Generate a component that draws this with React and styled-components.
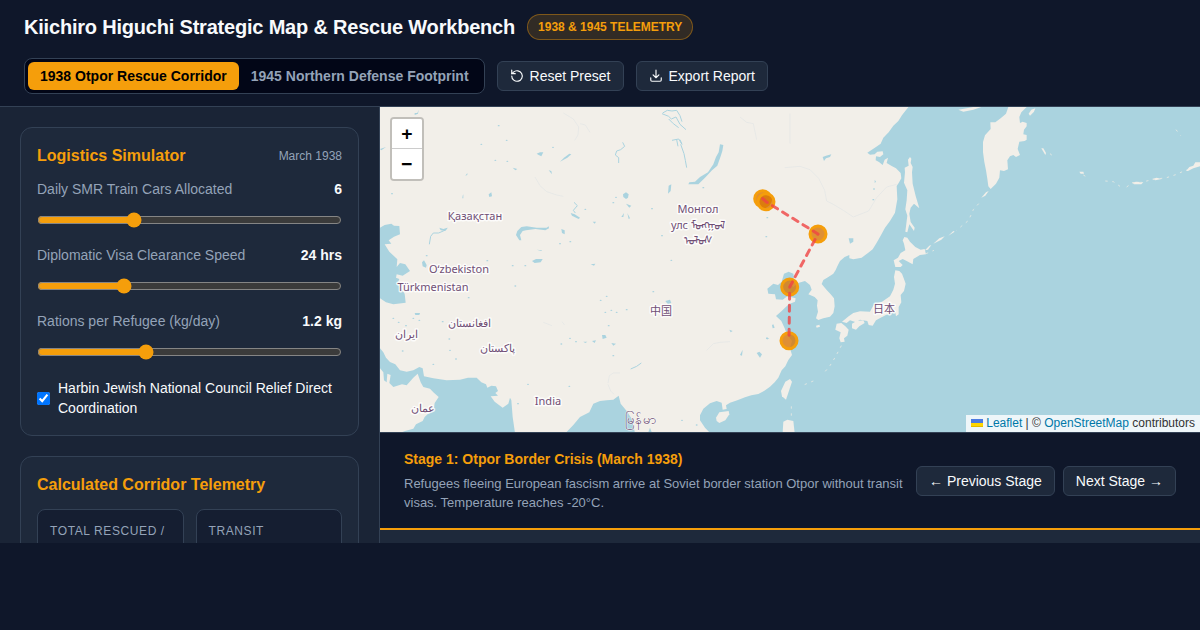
import React, { useState } from "react";
import styled, { createGlobalStyle } from "styled-components";

const GlobalStyle = createGlobalStyle`
  * {
    box-sizing: border-box;
  }

  body {
    margin: 0;
    background: #0f172a;
    color: #f8fafc;
    font-family: "Liberation Sans", Arial, sans-serif;
    font-size: 14px;
  }

  h1, h2, h3, p {
    margin: 0;
  }
`;

const sliders = [
  { id: "cars", label: "Daily SMR Train Cars Allocated", min: 2, max: 15, step: 1, value: 6, format: (v) => v },
  { id: "visa", label: "Diplomatic Visa Clearance Speed", min: 6, max: 72, step: 1, value: 24, format: (v) => `${v} hrs` },
  { id: "rations", label: "Rations per Refugee (kg/day)", min: 0.5, max: 2.5, step: 0.1, value: 1.2, format: (v) => `${v} kg` },
];

const stops = [
  [382.7, 91.7],
  [386, 94.7],
  [438, 127],
  [409.7, 180],
  [409, 233.7],
];

const labels = [
  { x: 95, y: 113, text: "Қазақстан" },
  { x: 79, y: 166, text: "Oʻzbekiston" },
  { x: 53, y: 184, text: "Türkmenistan" },
  { x: 318, y: 106, text: "Монгол" },
  { x: 318, y: 122, text: "улс ᠮᠣᠩᠭᠣᠯ" },
  { x: 318, y: 137, text: "ᠤᠯᠤᠰ" },
  { x: 281, y: 208, text: "中国" },
  { x: 504, y: 206, text: "日本" },
  { x: 89, y: 220, text: "افغانستان" },
  { x: 26, y: 231, text: "ایران" },
  { x: 117, y: 245, text: "پاکستان" },
  { x: 43, y: 305, text: "عمان" },
  { x: 168, y: 298, text: "India" },
  { x: 261, y: 317, text: "မြန်မာ", large: true },
];

// Coastlines are plotted on a grid three times finer than the map units
const seas = [
  "M1585 0L1572 14 1564 28 1555 42 1540 56 1526 76 1510 92 1502 110 1488 120 1462 137 1470 143 1484 142 1492 134 1508 133 1510 142 1500 150 1488 148 1487 160 1497 165 1508 174 1514 158 1524 152 1520 168 1535 177 1548 184 1562 198 1564 214 1556 228 1550 237 1552 277 1545 317 1530 342 1515 362 1502 386 1490 407 1478 427 1465 437 1445 452 1420 457 1408 454 1408 444 1394 450 1380 462 1372 478 1367 489 1360 500 1345 510 1330 519 1325 531 1340 549 1352 562 1362 574 1364 598 1360 618 1350 629 1330 634 1315 639 1308 634 1314 614 1311 596 1313 580 1304 570 1285 562 1295 548 1290 534 1275 522 1257 527 1240 540 1228 528 1242 512 1240 500 1226 494 1212 500 1205 524 1194 534 1180 530 1162 545 1165 560 1185 562 1188 577 1208 578 1222 568 1247 574 1245 584 1226 592 1205 612 1188 627 1204 642 1214 664 1220 680 1236 702 1230 724 1236 744 1225 759 1216 778 1205 790 1195 812 1184 826 1170 839 1152 852 1135 861 1114 865 1095 871 1072 880 1050 887 1038 895 1040 906 1028 908 1025 887 1010 882 990 889 970 905 960 925 960 940 975 962 990 978H2460V0Z",
  "M0 724L10 736 18 752 30 765 46 772 60 790 80 794 100 790 118 780 128 784 132 808 160 814 200 820 240 818 264 812 290 812 304 826 318 832 322 842 334 836 348 838 354 852 346 858 354 866 332 868 344 884 368 902 385 890 390 872 394 880 398 930 405 978H60L75 972 100 965 108 952 128 942 134 930 150 915 162 902 164 888 176 870 160 856 150 845 130 840 122 826 113 800 100 812 80 835 66 832 40 840 28 828 32 804 22 800 20 826 12 820 10 796 0 784Z",
  "M557 978L580 954 600 930 628 916 640 890 660 882 680 880 700 878 716 866 722 890 740 912 755 935 765 978Z",
  "M0 362L14 354 34 350 42 356 58 357 60 382 42 389 26 400 34 410 14 412 28 434 52 457 50 480 60 468 76 472 90 492 68 506 50 502 48 512 58 516 52 530 74 560 77 587 40 592 18 586 0 574Z",
  "M1020 112L1030 114 1027 132 1022 148 1012 176 996 190 975 212 955 232 925 232 928 226 945 224 960 210 984 196 1000 172 1008 150 1016 136Z",
  "M408 384L412 372 424 360 440 358 470 362 500 362 506 358 507 364 496 370 466 366 438 370 428 372 420 384 424 400 418 400Z",
  "M804 978L810 962 816 978Z",
];

const islands = [
  "M1885 0L1878 20 1862 34 1846 46 1831 46 1832 66 1815 85 1809 105 1809 135 1813 165 1818 190 1822 215 1825 238 1832 246 1848 230 1858 212 1860 190 1872 192 1884 187 1882 160 1890 148 1900 144 1908 150 1920 144 1913 126 1918 104 1934 102 1940 98 1940 84 1930 82 1932 68 1940 58 1940 48 1928 44 1920 48 1918 30 1924 16 1940 0Z",
  "M1590 150L1584 158 1586 176 1574 182 1575 196 1572 227 1582 250 1580 280 1576 307 1582 326 1576 374 1582 376 1588 352 1602 372 1604 362 1592 345 1588 320 1592 302 1602 290 1618 304 1607 267 1598 230 1596 196 1598 180 1592 168 1594 155Z",
  "M1573 390L1582 392 1590 404 1606 420 1622 428 1634 426 1638 442 1620 444 1600 456 1598 472 1580 462 1568 456 1556 462 1568 474 1562 480 1546 480 1541 460 1554 452 1562 438 1576 430 1572 410 1568 400Z",
  "M1546 490L1558 492 1566 500 1572 516 1577 530 1572 552 1562 564 1564 586 1556 600 1556 622 1548 628 1546 616 1530 620 1518 624 1502 632 1488 640 1478 656 1466 654 1462 642 1440 638 1428 646 1410 640 1400 648 1386 644 1406 628 1420 618 1440 613 1470 614 1482 592 1506 584 1530 568 1540 548 1545 530 1542 510Z",
  "M1370 650L1384 648 1396 658 1406 668 1402 686 1392 694 1394 704 1382 706 1378 694 1382 676 1366 668Z",
  "M1416 650L1430 642 1450 640 1454 648 1438 658 1428 668 1416 664Z",
  "M1216 824L1230 816 1236 824 1228 848 1218 878 1206 868 1203 852Z",
  "M1008 932L1018 916 1046 912 1048 922 1036 940 1018 948 1010 942Z",
  "M1210 944L1222 938 1240 942 1244 978H1208Z",
  "M1308 656L1318 653 1320 659 1310 662Z",
  "M1735 8L1760 4 1780 0H1804L1780 8 1750 14Z",
  "M1560 0H1585L1568 22 1556 28Z",
  "M1946 20L1954 8 1966 4 1962 14 1950 26Z",
  "M1804 272L1818 256 1826 252 1816 266Z",
  "M1635 430L1648 416 1654 414 1644 428Z",
  "M1660 410L1678 394 1694 388 1684 398Z",
  "M1705 386L1720 372 1724 374Z",
  "M1984 124L1990 124 1998 138 1996 144Z",
  "M2098 194L2110 194 2112 200 2102 200Z",
  "M2418 192L2428 180 2440 176 2446 166 2460 166V178L2440 184 2424 192Z",
  "M2256 226L2270 224 2290 226 2284 232 2262 232Z",
  "M2316 216L2330 212 2345 216 2326 220Z",
];

const lakes = [
  "M470 140L480 136 490 136 484 148 476 144Z",
  "M540 164L552 152 568 140 574 142 562 152Z",
  "M506 190L514 192 516 202Z",
  "M398 182L412 186 406 190Z",
  "M326 262L334 256 336 268 328 270Z",
  "M256 206L262 198 262 204Z",
  "M248 266L250 262 250 274 247 274Z",
  "M729 262L738 256 746 262 744 272 738 276 730 270Z",
  "M738 290L754 296 748 302Z",
  "M724 330L732 318 730 330Z",
  "M742 318L750 334 746 336Z",
  "M572 318L584 322 600 332 596 336 576 326Z",
  "M544 366L554 370 554 382 546 378Z",
  "M638 344L648 344 644 350Z",
  "M456 462L468 456 488 456 482 466 464 468Z",
  "M470 428L486 430 484 432Z",
  "M126 466L132 460 140 474 138 482 128 478Z",
  "M632 472L646 470 642 476Z",
  "M178 362L190 366 202 362 196 372 182 370Z",
  "M104 18L112 18 116 8 114 20 104 24Z",
  "M0 126L18 120 4 130Z",
  "M1328 150L1338 146 1354 142 1350 150 1338 154 1332 162Z",
  "M1406 394L1420 394 1420 404 1410 410Z",
  "M866 236L874 232 872 252 864 260Z",
  "M856 582L870 578 874 588 864 592Z",
  "M104 618L120 618 118 624 106 624Z",
  "M666 684L676 684 680 692 668 696Z",
  "M694 708L708 710 700 716Z",
  "M1130 738L1138 734 1146 742 1140 752Z",
  "M1158 694L1164 692 1162 698Z",
  "M1176 654L1180 652 1184 662 1178 664Z",
  "M1080 744L1088 728 1086 746Z",
  "M1048 668L1058 672 1052 676Z",
  "M1160 690L1168 696 1158 696Z",
  "M610 704L622 704 616 708Z",
  "M636 702L648 700 644 708Z",
  "M1484 218L1488 224 1484 228Z",
];

const ponds = [
  [356, 56], [380, 100], [304, 112], [346, 160], [382, 163], [519, 121], [36, 260], [616, 307],
  [700, 287], [816, 305], [708, 271], [540, 410], [571, 404], [140, 446], [322, 461], [398, 476],
  [436, 476], [304, 500], [406, 537], [266, 572], [40, 634], [100, 634], [56, 646], [78, 656],
  [188, 644], [68, 732], [160, 772], [210, 730], [228, 756], [662, 580], [680, 568], [676, 616],
  [694, 610], [740, 608], [710, 616], [686, 656], [570, 694], [588, 704], [544, 711], [700, 746],
  [568, 838], [444, 832], [414, 890], [820, 554], [1162, 332], [1159, 389], [846, 386], [874, 460],
  [970, 242], [1482, 246], [1480, 278], [906, 940], [950, 954], [118, 640], [208, 696],
];

const rivers = [
  "M148 412L152 388 160 378 176 378 190 372 202 364",
  "M728 106L734 118 722 128 710 132 706 144 716 152 716 168",
  "M582 286L592 296 580 310 586 318",
  "M848 18L862 10 876 12 890 10 900 26 906 44",
  "M846 20L866 28 874 36 888 30 900 52 918 68",
  "M876 100L896 96 906 112 900 98M890 98L894 118M902 112L912 140 916 160 920 182",
  "M866 36L880 50 896 62",
  "M752 786L770 778 784 768",
];

const streams = [
  "M465 210L480 236 500 254 530 264 550 268",
  "M550 18L580 36 596 60 594 84 584 100M600 50L616 54 630 76",
  "M1214 182L1260 178 1290 188 1316 214 1334 250 1340 282 1360 292 1390 310 1420 330 1466 312 1490 272 1520 240 1550 232",
  "M1230 20V110M1080 30L1100 46 1120 50 1130 98",
  "M490 646L516 656M546 644L554 654M980 730L1000 710 1020 706 1050 704",
  "M684 828L688 806 700 798 720 798M684 832L692 852 702 862",
];

const ResetIcon = () => (
  <svg width="14" height="14" viewBox="0 0 24 24" fill="none" stroke="currentColor" strokeWidth="2" strokeLinecap="round" strokeLinejoin="round" aria-hidden="true">
    <path d="M3 12a9 9 0 1 0 3-6.7L3 8" />
    <path d="M3 2v6h6" />
  </svg>
);

const DownloadIcon = () => (
  <svg width="14" height="14" viewBox="0 0 24 24" fill="none" stroke="currentColor" strokeWidth="2" strokeLinecap="round" strokeLinejoin="round" aria-hidden="true">
    <path d="M21 15v4a2 2 0 0 1-2 2H5a2 2 0 0 1-2-2v-4M7 10l5 5 5-5M12 15V2" />
  </svg>
);

const MapCanvas = () => (
  <MapSvg viewBox="0 0 820 325" preserveAspectRatio="xMidYMid slice" role="img" aria-label="Rescue corridor map">
    <rect width="820" height="325" fill="#f2efe9" />
    <g transform="scale(0.33333)">
      <g fill="none" stroke="#e3e6e5" strokeWidth="2">
        {streams.map((d) => <path key={d} d={d} />)}
      </g>
      <g fill="#aad3df">
        {seas.map((d) => <path key={d} d={d} />)}
        {lakes.map((d) => <path key={d} d={d} />)}
        {ponds.map(([x, y], i) => <ellipse key={i} cx={x} cy={y} rx="3" ry="2" />)}
      </g>
      <g fill="none" stroke="#aad3df" strokeWidth="3">
        {rivers.map((d) => <path key={d} d={d} />)}
      </g>
      <g fill="#f2efe9">
        {islands.map((d) => <path key={d} d={d} />)}
      </g>
      <g fill="none" stroke="#dfe6e2" strokeWidth="3" strokeDasharray="7 14">
        <path d="M1796 290L1780 308 1766 340 1744 358 1730 370M1638 440L1662 430" />
        <path d="M2110 204L2120 210M2176 222L2200 224 2220 238M2240 240L2256 228 2284 226 2316 218 2360 212 2390 202 2420 188M2010 140L2020 148" />
        <path d="M1384 716L1366 750 1350 776 1330 800M1300 822L1266 836M1234 898V936M2388 68L2402 86" />
      </g>
    </g>
    <g fill="#d97706" fillOpacity="0.8" stroke="#f59e0b" strokeWidth="3">
      {stops.map(([x, y]) => <circle key={x} cx={x} cy={y} r="8" />)}
    </g>
    <polyline points={stops.map((s) => s.join(",")).join(" ")} fill="none" stroke="#ef4444" strokeOpacity="0.8" strokeWidth="3" strokeDasharray="6 6" strokeLinecap="round" strokeLinejoin="round" />
    {labels.map((l) => (
      <MapLabel key={l.text} x={l.x} y={l.y} $large={l.large}>{l.text}</MapLabel>
    ))}
  </MapSvg>
);

const App = () => {
  const [preset, setPreset] = useState("1938");
  const [values, setValues] = useState(sliders.map((s) => s.value));
  const [relief, setRelief] = useState(true);

  const handleSlide = (index, value) => {
    setValues(values.map((v, i) => (i === index ? value : v)));
  };

  return (
    <Page>
      <GlobalStyle />
      <Header>
        <TitleRow>
          <Title>Kiichiro Higuchi Strategic Map &amp; Rescue Workbench</Title>
          <Badge>1938 &amp; 1945 TELEMETRY</Badge>
        </TitleRow>
        <Toolbar>
          <Tabs>
            <Tab $active={preset === "1938"} onClick={() => setPreset("1938")}>
              1938 Otpor Rescue Corridor
            </Tab>
            <Tab $active={preset === "1945"} onClick={() => setPreset("1945")}>
              1945 Northern Defense Footprint
            </Tab>
          </Tabs>
          <Button onClick={() => setValues(sliders.map((s) => s.value))}>
            <ResetIcon />
            Reset Preset
          </Button>
          <Button>
            <DownloadIcon />
            Export Report
          </Button>
        </Toolbar>
      </Header>

      <Workspace>
        <Sidebar>
          <Card>
            <CardHeader>
              <CardTitle>Logistics Simulator</CardTitle>
              <CardDate>March 1938</CardDate>
            </CardHeader>
            {sliders.map((s, i) => (
              <Control key={s.id}>
                <ControlLabel htmlFor={s.id}>
                  {s.label}
                  <strong>{s.format(values[i])}</strong>
                </ControlLabel>
                <Slider
                  id={s.id}
                  type="range"
                  min={s.min}
                  max={s.max}
                  step={s.step}
                  value={values[i]}
                  onChange={(e) => handleSlide(i, Number(e.target.value))}
                />
              </Control>
            ))}
            <CheckLabel>
              <input type="checkbox" checked={relief} onChange={(e) => setRelief(e.target.checked)} />
              Harbin Jewish National Council Relief Direct Coordination
            </CheckLabel>
          </Card>
          <Card>
            <CardHeader>
              <CardTitle>Calculated Corridor Telemetry</CardTitle>
            </CardHeader>
            <Stats>
              <Stat>Total Rescued /</Stat>
              <Stat>Transit</Stat>
            </Stats>
          </Card>
        </Sidebar>

        <Main>
          <MapPanel>
            <MapCanvas />
            <ZoomControl>
              <ZoomButton aria-label="Zoom in">+</ZoomButton>
              <ZoomButton aria-label="Zoom out">−</ZoomButton>
            </ZoomControl>
            <Attribution>
              <a href="#leaflet">
                <svg width="12" height="8" viewBox="0 0 12 8" aria-hidden="true">
                  <path fill="#4C7BE1" d="M0 0h12v4H0z" />
                  <path fill="#FFD500" d="M0 4h12v3H0z" />
                  <path fill="#E0BC00" d="M0 7h12v1H0z" />
                </svg>{" "}
                Leaflet
              </a>{" "}
              | © <a href="#osm">OpenStreetMap</a> contributors
            </Attribution>
          </MapPanel>
          <Stage>
            <StageText>
              <StageTitle>Stage 1: Otpor Border Crisis (March 1938)</StageTitle>
              <StageDescription>
                Refugees fleeing European fascism arrive at Soviet border station Otpor without transit visas. Temperature
                reaches -20°C.
              </StageDescription>
            </StageText>
            <StageButtons>
              <Button>← Previous Stage</Button>
              <Button>Next Stage →</Button>
            </StageButtons>
          </Stage>
          <BottomStrip />
        </Main>
      </Workspace>
    </Page>
  );
};

const Page = styled.div`
  height: calc(100vh - 87px);
  display: flex;
  flex-direction: column;
  overflow: hidden;
`;

const Header = styled.header`
  display: flex;
  flex-direction: column;
  gap: 16px;
  padding: 12px 24px;
  border-bottom: 1px solid #334155;
`;

const TitleRow = styled.div`
  display: flex;
  align-items: center;
  gap: 12px;
`;

const Title = styled.h1`
  font-size: 20px;
  line-height: 30px;
  font-weight: 700;
  letter-spacing: -0.01em;
`;

const Badge = styled.span`
  padding: 0 10px;
  border: 1px solid rgba(245, 158, 11, 0.4);
  border-radius: 13px;
  background: rgba(245, 158, 11, 0.15);
  color: #f59e0b;
  font-size: 12px;
  line-height: 24px;
  font-weight: 700;
`;

const Toolbar = styled.div`
  display: flex;
  align-items: center;
  gap: 12px;
`;

const Tabs = styled.div`
  display: flex;
  padding: 3px;
  border: 1px solid #334155;
  border-radius: 8px;
  background: #020617;
`;

const Tab = styled.button`
  height: 28px;
  padding: 0 12px;
  border: none;
  border-radius: 6px;
  background: ${(props) => (props.$active ? "#f59e0b" : "transparent")};
  color: ${(props) => (props.$active ? "#000" : "#94a3b8")};
  font-family: inherit;
  font-size: 14px;
  font-weight: 700;
  cursor: pointer;
`;

const Button = styled.button`
  display: inline-flex;
  align-items: center;
  justify-content: center;
  gap: 6px;
  height: 30px;
  padding: 0 12px;
  border: 1px solid #334155;
  border-radius: 6px;
  background: #1e293b;
  color: #f8fafc;
  font-family: inherit;
  font-size: 14px;
  white-space: nowrap;
  cursor: pointer;
`;

const Workspace = styled.div`
  flex: 1;
  min-height: 0;
  display: grid;
  grid-template-columns: 380px 1fr;
`;

const Sidebar = styled.aside`
  display: flex;
  flex-direction: column;
  gap: 20px;
  min-height: 0;
  padding: 20px;
  border-right: 1px solid #334155;
  background: #1a2436;
  overflow: hidden;
`;

const Card = styled.section`
  flex-shrink: 0;
  padding: 16px 16px 17px;
  border: 1px solid #334155;
  border-radius: 12px;
  background: #1e293b;
`;

const CardHeader = styled.div`
  display: flex;
  align-items: center;
  justify-content: space-between;
  margin-bottom: 12px;
`;

const CardTitle = styled.h2`
  color: #f59e0b;
  font-size: 16px;
  line-height: 24px;
`;

const CardDate = styled.span`
  color: #94a3b8;
  font-size: 12px;
`;

const Control = styled.div`
  display: flex;
  flex-direction: column;
  gap: 13px;
  margin-bottom: 18px;
`;

const ControlLabel = styled.label`
  display: flex;
  justify-content: space-between;
  color: #94a3b8;
  line-height: 19px;

  strong {
    color: #f8fafc;
  }
`;

const Slider = styled.input`
  width: 100%;
  height: 16px;
  margin: 0;
  accent-color: #f59e0b;
`;

const CheckLabel = styled.label`
  display: flex;
  align-items: center;
  gap: 8px;
  line-height: 20px;

  input {
    flex-shrink: 0;
    margin: 0;
  }
`;

const Stats = styled.div`
  display: grid;
  grid-template-columns: 1fr 1fr;
  gap: 12px;
`;

const Stat = styled.div`
  min-height: 90px;
  padding: 12px;
  border: 1px solid #334155;
  border-radius: 8px;
  background: #151e31;
  color: #94a3b8;
  font-size: 12px;
  line-height: 18px;
  letter-spacing: 0.05em;
  text-transform: uppercase;
`;

const Main = styled.main`
  display: flex;
  flex-direction: column;
  min-width: 0;
  min-height: 0;
`;

const MapPanel = styled.div`
  position: relative;
  flex: 1;
  min-height: 0;
  background: #f2efe9;
`;

const MapSvg = styled.svg`
  display: block;
  width: 100%;
  height: 100%;
`;

const MapLabel = styled.text`
  fill: #704f75;
  stroke: #fff;
  stroke-opacity: 0.8;
  stroke-width: ${(props) => (props.$large ? "1px" : "3px")};
  stroke-linejoin: round;
  paint-order: stroke;
  font-family: "Noto Sans", "Noto Sans CJK SC", sans-serif;
  font-size: ${(props) => (props.$large ? "13px" : "11px")};
  text-anchor: middle;
`;

const ZoomControl = styled.div`
  position: absolute;
  top: 10px;
  left: 10px;
  display: flex;
  flex-direction: column;
  border: 2px solid rgba(0, 0, 0, 0.2);
  border-radius: 4px;
  background-clip: padding-box;
`;

const ZoomButton = styled.button`
  width: 30px;
  height: 30px;
  padding: 0;
  border: none;
  background: #fff;
  color: #000;
  font: bold 18px/30px "DejaVu Sans Mono", monospace;
  cursor: pointer;

  &:first-child {
    border-bottom: 1px solid #ccc;
    border-radius: 2px 2px 0 0;
  }

  &:last-child {
    border-radius: 0 0 2px 2px;
  }
`;

const Attribution = styled.div`
  position: absolute;
  right: 0;
  bottom: 0;
  padding: 0 5px;
  background: rgba(255, 255, 255, 0.8);
  color: #333;
  font-size: 12px;
  line-height: 17px;

  a {
    color: #0078a8;
    text-decoration: none;
  }
`;

const Stage = styled.section`
  display: flex;
  align-items: center;
  justify-content: space-between;
  gap: 12px;
  padding: 16px 24px;
  border-top: 1px solid #334155;
  border-bottom: 2px solid #f59e0b;
`;

const StageText = styled.div`
  flex: 1;
`;

const StageTitle = styled.h3`
  margin-bottom: 4px;
  color: #f59e0b;
  font-size: 14px;
  line-height: 21px;
`;

const StageDescription = styled.p`
  color: #94a3b8;
  font-size: 13px;
  line-height: 19px;
`;

const StageButtons = styled.div`
  display: flex;
  gap: 8px;
`;

const BottomStrip = styled.div`
  height: 13px;
  background: #1e293b;
`;

export default App;
